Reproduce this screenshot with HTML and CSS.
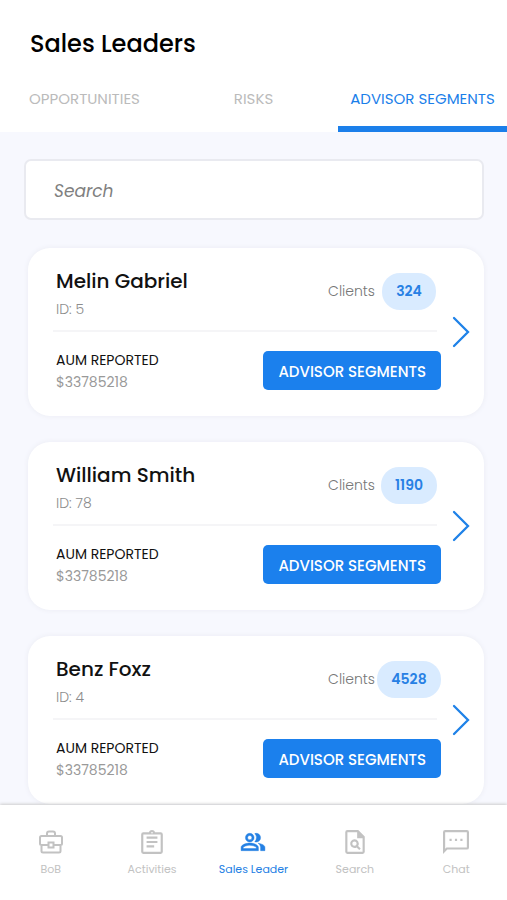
FILE: index.html
```html
<!DOCTYPE html>
<html lang="en">
<head>
<meta charset="utf-8">
<meta name="viewport" content="width=device-width, initial-scale=1">
<title>Sales Leaders</title>
<link rel="stylesheet" href="styles.css">
</head>
<body>
<header class="header">
  <h1 class="title">Sales Leaders</h1>
  <nav class="tabs">
    <a class="tab" href="#opportunities">OPPORTUNITIES</a>
    <a class="tab" href="#risks">RISKS</a>
    <a class="tab tab-active" href="#segments">ADVISOR SEGMENTS</a>
  </nav>
</header>
<main class="content">
  <input class="search" type="search" placeholder="Search" aria-label="Search">
  <div class="cards">
    <article class="card">
      <div class="card-body">
        <div class="card-top">
          <div>
            <h2 class="name">Melin Gabriel</h2>
            <p class="meta">ID: 5</p>
          </div>
          <div class="clients"><span>Clients</span><span class="badge-slot"><span class="badge">324</span></span></div>
        </div>
        <hr class="divider">
        <div class="card-bottom">
          <div>
            <p class="label">AUM REPORTED</p>
            <p class="amount">$33785218</p>
          </div>
          <button class="button" type="button">ADVISOR SEGMENTS</button>
        </div>
      </div>
      <a class="chevron" href="#melin" aria-label="Open Melin Gabriel"><svg width="18" height="32" viewBox="0 0 18 32"><path d="M2 2l14 14L2 30"/></svg></a>
    </article>
    <article class="card">
      <div class="card-body">
        <div class="card-top">
          <div>
            <h2 class="name">William Smith</h2>
            <p class="meta">ID: 78</p>
          </div>
          <div class="clients"><span>Clients</span><span class="badge-slot"><span class="badge">1190</span></span></div>
        </div>
        <hr class="divider">
        <div class="card-bottom">
          <div>
            <p class="label">AUM REPORTED</p>
            <p class="amount">$33785218</p>
          </div>
          <button class="button" type="button">ADVISOR SEGMENTS</button>
        </div>
      </div>
      <a class="chevron" href="#william" aria-label="Open William Smith"><svg width="18" height="32" viewBox="0 0 18 32"><path d="M2 2l14 14L2 30"/></svg></a>
    </article>
    <article class="card">
      <div class="card-body">
        <div class="card-top">
          <div>
            <h2 class="name">Benz Foxz</h2>
            <p class="meta">ID: 4</p>
          </div>
          <div class="clients"><span>Clients</span><span class="badge-slot"><span class="badge">4528</span></span></div>
        </div>
        <hr class="divider">
        <div class="card-bottom">
          <div>
            <p class="label">AUM REPORTED</p>
            <p class="amount">$33785218</p>
          </div>
          <button class="button" type="button">ADVISOR SEGMENTS</button>
        </div>
      </div>
      <a class="chevron" href="#benz" aria-label="Open Benz Foxz"><svg width="18" height="32" viewBox="0 0 18 32"><path d="M2 2l14 14L2 30"/></svg></a>
    </article>
  </div>
</main>
<nav class="bottom-nav">
  <a class="nav-item" href="#bob">
    <svg class="icon icon-line" viewBox="0 0 26 26"><path d="M9 7V4.500Q9 2.500 11 2.500h4q2 0 2 2V7M3.500 7h19Q24 7 24 8.500v6q0 1.500-1.500 1.500H16M10 16H3.500Q2 16 2 14.500v-6Q2 7 3.500 7M3.500 16v6q0 1.500 1.500 1.500h16q1.500 0 1.500-1.500v-6M10.500 13.500h5v5h-5z"/></svg>
    <span>BoB</span>
  </a>
  <a class="nav-item" href="#activities">
    <svg class="icon" viewBox="0 0 24 24"><path d="M7 15h7v2H7zm0-4h10v2H7zm0-4h10v2H7zm12-4h-4.180C14.400 1.840 13.300 1 12 1s-2.400.840-2.820 2H4a2 2 0 0 0-2 2v16a2 2 0 0 0 2 2h16a2 2 0 0 0 2-2V5a2 2 0 0 0-2-2zm-7-.250a.750.750 0 1 1 0 1.500.750.750 0 0 1 0-1.500zM20 21H4V5h16z"/></svg>
    <span>Activities</span>
  </a>
  <a class="nav-item nav-active" href="#leaders">
    <svg class="icon icon-bold" viewBox="0 0 24 24"><path d="M16.670 13.130C18.040 14.060 19 15.320 19 17v3h4v-3c0-2.180-3.570-3.470-6.330-3.870zM15 12a4 4 0 0 0 0-8c-.470 0-.910.100-1.330.240a5.980 5.980 0 0 1 0 7.520c.420.140.860.240 1.330.240zM9 12a4 4 0 1 0 0-8 4 4 0 0 0 0 8zm0-6a2 2 0 1 1 0 4 2 2 0 0 1 0-4zm0 7c-2.670 0-8 1.340-8 4v3h16v-3c0-2.660-5.330-4-8-4zm6 5H3v-.990C3.200 16.290 6.300 15 9 15s5.800 1.290 6 2z"/></svg>
    <span>Sales Leader</span>
  </a>
  <a class="nav-item" href="#search">
    <svg class="icon" viewBox="0 0 24 24"><path fill-rule="evenodd" d="M5 1h10l6 6v14a2 2 0 0 1-2 2H5a2 2 0 0 1-2-2V3a2 2 0 0 1 2-2zm0 2v18h14V8.500h-5V3zM11.500 9.500a4 4 0 0 1 3.400 6.100l2.400 2.400-1.400 1.400-2.400-2.400a4 4 0 1 1-2-7.500zm0 2a2 2 0 1 0 0 4 2 2 0 0 0 0-4z"/></svg>
    <span>Search</span>
  </a>
  <a class="nav-item" href="#chat">
    <svg class="icon" viewBox="0 0 24 24"><path d="M22 1H2a2 2 0 0 0-2 2v20l4-4h18a2 2 0 0 0 2-2V3a2 2 0 0 0-2-2zm0 16H3.200L2 18.200V3h20zM6 9h2v2H6zm5 0h2v2h-2zm5 0h2v2h-2z"/></svg>
    <span>Chat</span>
  </a>
</nav>
</body>
</html>
```
FILE: styles.css
```css
* {
  box-sizing: border-box;
}

body {
  display: flex;
  flex-direction: column;
  height: 100vh;
  margin: 0;
  background: #f7f8fe;
  color: #111;
  font-family: Poppins, Inter, sans-serif;
}

h1, h2, p {
  margin: 0;
  font-weight: 500;
}

a {
  color: inherit;
  text-decoration: none;
}

.header {
  flex: none;
  background: #fff;
}

.title {
  padding: 26px 30px 0;
  color: #000;
  font-size: 24px;
  line-height: 36px;
}

.tabs {
  display: grid;
  grid-template-columns: repeat(3, 1fr);
  margin-top: 4px;
}

.tab {
  height: 66px;
  padding-top: 22px;
  border-bottom: 6px solid transparent;
  color: #bbb;
  font-size: 15px;
  line-height: 22px;
  text-align: center;
  white-space: nowrap;
}

.tab-active {
  border-color: #1b7fea;
  color: #1b7fea;
}

.content {
  flex: 1;
  min-height: 0;
  padding: 27px 23px 26px 24px;
  overflow-y: auto;
  scrollbar-width: none;
}

.search {
  display: block;
  width: 100%;
  height: 61px;
  padding: 2px 28px 0;
  border: 2px solid #e9eaf0;
  border-radius: 7px;
  background: #fff;
  font-family: inherit;
  font-size: 17px;
  font-style: italic;
  appearance: none;
}

.search::placeholder {
  color: #808080;
}

.cards {
  display: grid;
  gap: 26px;
  padding: 28px 0 0 4px;
}

.card {
  display: flex;
  align-items: center;
  gap: 11px;
  padding: 0 14px 0 25px;
  border-radius: 22px;
  background: #fff;
  box-shadow: 0 0 4px 1px #eeeff6;
}

.card-body {
  flex: 1;
}

.card-top,
.card-bottom {
  display: flex;
  align-items: flex-start;
  justify-content: space-between;
  padding-left: 3px;
}

.card-top {
  padding-top: 19px;
  padding-bottom: 10px;
}

.divider {
  height: 2px;
  margin: 0 4px 0 0;
  border: 0;
  background: #f5f5f7;
}

.card-bottom {
  padding-top: 17px;
  padding-bottom: 23px;
}

.name {
  font-size: 20px;
  line-height: 28px;
}

.meta {
  margin-top: 3px;
  color: #8c8c8c;
  font-size: 14px;
  font-weight: 300;
  line-height: 22px;
}

.clients {
  display: flex;
  align-items: center;
  gap: 2px;
  padding-top: 6px;
  color: #777;
  font-size: 14px;
  font-weight: 300;
}

.badge-slot {
  display: flex;
  justify-content: center;
  width: 64px;
}

.badge {
  padding: 0 14px;
  border-radius: 18px;
  background: #d9ebff;
  color: #2880e4;
  font-weight: 600;
  line-height: 37px;
}

.label {
  font-size: 14px;
  font-weight: 400;
  line-height: 22px;
}

.amount {
  color: #999;
  font-size: 14px;
  font-weight: 400;
  line-height: 22px;
}

.button {
  height: 39px;
  margin-top: 2px;
  padding: 1px 15px 0;
  border: 0;
  border-radius: 5px;
  background: #1b80ed;
  color: #fff;
  font-family: inherit;
  font-size: 15px;
  font-weight: 500;
  white-space: nowrap;
}

.chevron {
  display: flex;
}

.chevron path {
  fill: none;
  stroke: #1f82e8;
  stroke-width: 2.3;
  stroke-linecap: round;
}

.bottom-nav {
  position: relative;
  display: grid;
  flex: none;
  grid-template-columns: repeat(5, 1fr);
  padding: 24px 0 22px;
  background: #fff;
  box-shadow: 0 -1px 3px #ccc;
}

.nav-item {
  display: flex;
  flex-direction: column;
  align-items: center;
  gap: 5px;
  color: #c2c2c2;
  font-size: 11px;
  line-height: 18px;
}

.nav-active {
  color: #2480e4;
}

.icon {
  width: 26px;
  height: 26px;
  fill: currentColor;
}

.icon-line {
  fill: none;
  stroke: currentColor;
  stroke-width: 2;
}

.icon-bold {
  stroke: currentColor;
  stroke-width: 0.4;
}
```
